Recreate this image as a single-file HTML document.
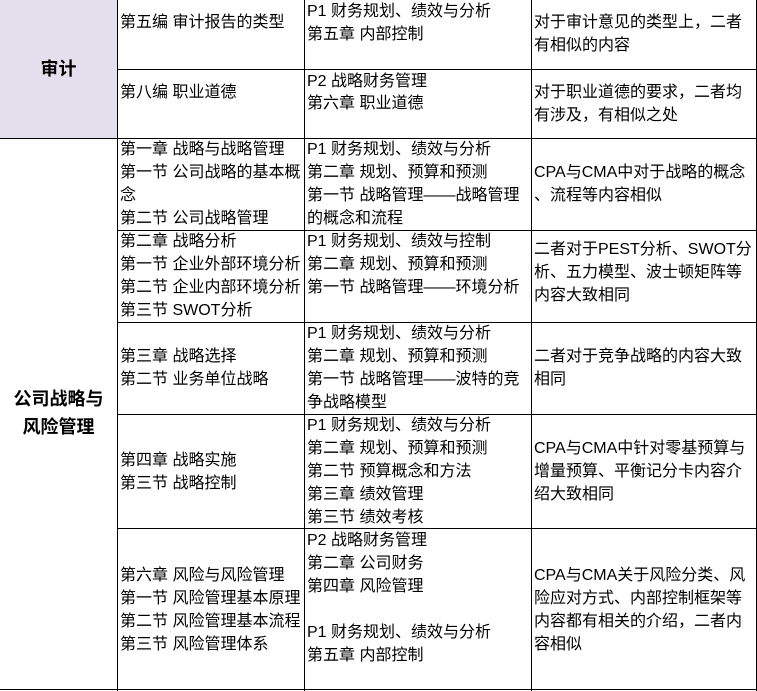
<!DOCTYPE html>
<html><head><meta charset="utf-8"><style>
body{margin:0;background:#fff;}
#t{position:relative;width:757px;height:691px;overflow:hidden;font-family:"Liberation Sans","Microsoft YaHei","Noto Sans CJK SC",sans-serif;font-size:16px;color:#000;}
.l{position:absolute;white-space:nowrap;line-height:23px;height:23px;}
.h{position:absolute;background:#000;height:1px;}
.v{position:absolute;background:#000;width:1px;}
.b{font-weight:bold;font-size:18px;width:117px;text-align:center;}
</style></head><body><div id="t">
<div style="position:absolute;left:0;top:0;width:117px;height:691px;background:#e4dfec"></div>
<div style="position:absolute;left:0;top:139px;width:117px;height:552px;background:#fff"></div>
<div class="v" style="left:117px;top:0;height:691px"></div>
<div class="v" style="left:304px;top:0;height:691px"></div>
<div class="v" style="left:531px;top:0;height:691px"></div>
<div class="v" style="left:756px;top:0;height:691px"></div>
<div class="h" style="left:117px;top:69px;width:640px"></div>
<div class="h" style="left:0;top:138px;width:757px"></div>
<div class="h" style="left:117px;top:230px;width:640px"></div>
<div class="h" style="left:117px;top:322px;width:640px"></div>
<div class="h" style="left:117px;top:414px;width:640px"></div>
<div class="h" style="left:117px;top:528px;width:640px"></div>
<div class="h" style="left:0;top:689px;width:757px"></div>

<div class="l b" style="left:0;top:58px">审计</div>
<div class="l b" style="left:0;top:388px">公司战略与</div>
<div class="l b" style="left:0;top:416px">风险管理</div>

<div class="l" style="left:120px;top:11px">第五编 审计报告的类型</div>
<div class="l" style="left:307px;top:0px">P1 财务规划、绩效与分析</div>
<div class="l" style="left:307px;top:23px">第五章 内部控制</div>
<div class="l" style="left:534px;top:11px">对于审计意见的类型上，二者</div>
<div class="l" style="left:534px;top:34px">有相似的内容</div>

<div class="l" style="left:120px;top:81px">第八编 职业道德</div>
<div class="l" style="left:307px;top:70px">P2 战略财务管理</div>
<div class="l" style="left:307px;top:92px">第六章 职业道德</div>
<div class="l" style="left:534px;top:81px">对于职业道德的要求，二者均</div>
<div class="l" style="left:534px;top:104px">有涉及，有相似之处</div>

<div class="l" style="left:120px;top:138px">第一章 战略与战略管理</div>
<div class="l" style="left:120px;top:161px">第一节 公司战略的基本概</div>
<div class="l" style="left:120px;top:184px">念</div>
<div class="l" style="left:120px;top:207px">第二节 公司战略管理</div>
<div class="l" style="left:307px;top:138px">P1 财务规划、绩效与分析</div>
<div class="l" style="left:307px;top:161px">第二章 规划、预算和预测</div>
<div class="l" style="left:307px;top:184px">第一节 战略管理——战略管理</div>
<div class="l" style="left:307px;top:207px">的概念和流程</div>
<div class="l" style="left:534px;top:161px">CPA与CMA中对于战略的概念</div>
<div class="l" style="left:534px;top:184px">、流程等内容相似</div>

<div class="l" style="left:120px;top:230px">第二章 战略分析</div>
<div class="l" style="left:120px;top:253px">第一节 企业外部环境分析</div>
<div class="l" style="left:120px;top:276px">第二节 企业内部环境分析</div>
<div class="l" style="left:120px;top:299px">第三节 SWOT分析</div>
<div class="l" style="left:307px;top:230px">P1 财务规划、绩效与控制</div>
<div class="l" style="left:307px;top:253px">第二章 规划、预算和预测</div>
<div class="l" style="left:307px;top:276px">第一节 战略管理——环境分析</div>
<div class="l" style="left:534px;top:238px">二者对于PEST分析、SWOT分</div>
<div class="l" style="left:534px;top:261px">析、五力模型、波士顿矩阵等</div>
<div class="l" style="left:534px;top:284px">内容大致相同</div>

<div class="l" style="left:120px;top:345px">第三章 战略选择</div>
<div class="l" style="left:120px;top:368px">第二节 业务单位战略</div>
<div class="l" style="left:307px;top:322px">P1 财务规划、绩效与分析</div>
<div class="l" style="left:307px;top:345px">第二章 规划、预算和预测</div>
<div class="l" style="left:307px;top:368px">第一节 战略管理——波特的竞</div>
<div class="l" style="left:307px;top:391px">争战略模型</div>
<div class="l" style="left:534px;top:345px">二者对于竞争战略的内容大致</div>
<div class="l" style="left:534px;top:368px">相同</div>

<div class="l" style="left:120px;top:449px">第四章 战略实施</div>
<div class="l" style="left:120px;top:472px">第三节 战略控制</div>
<div class="l" style="left:307px;top:414px">P1 财务规划、绩效与分析</div>
<div class="l" style="left:307px;top:437px">第二章 规划、预算和预测</div>
<div class="l" style="left:307px;top:460px">第二节 预算概念和方法</div>
<div class="l" style="left:307px;top:483px">第三章 绩效管理</div>
<div class="l" style="left:307px;top:506px">第三节 绩效考核</div>
<div class="l" style="left:534px;top:437px">CPA与CMA中针对零基预算与</div>
<div class="l" style="left:534px;top:460px">增量预算、平衡记分卡内容介</div>
<div class="l" style="left:534px;top:483px">绍大致相同</div>

<div class="l" style="left:120px;top:564px">第六章 风险与风险管理</div>
<div class="l" style="left:120px;top:587px">第一节 风险管理基本原理</div>
<div class="l" style="left:120px;top:610px">第二节 风险管理基本流程</div>
<div class="l" style="left:120px;top:633px">第三节 风险管理体系</div>
<div class="l" style="left:307px;top:529px">P2 战略财务管理</div>
<div class="l" style="left:307px;top:552px">第二章 公司财务</div>
<div class="l" style="left:307px;top:575px">第四章 风险管理</div>
<div class="l" style="left:307px;top:621px">P1 财务规划、绩效与分析</div>
<div class="l" style="left:307px;top:644px">第五章 内部控制</div>
<div class="l" style="left:534px;top:564px">CPA与CMA关于风险分类、风</div>
<div class="l" style="left:534px;top:587px">险应对方式、内部控制框架等</div>
<div class="l" style="left:534px;top:610px">内容都有相关的介绍，二者内</div>
<div class="l" style="left:534px;top:633px">容相似</div>
</div></body></html>
